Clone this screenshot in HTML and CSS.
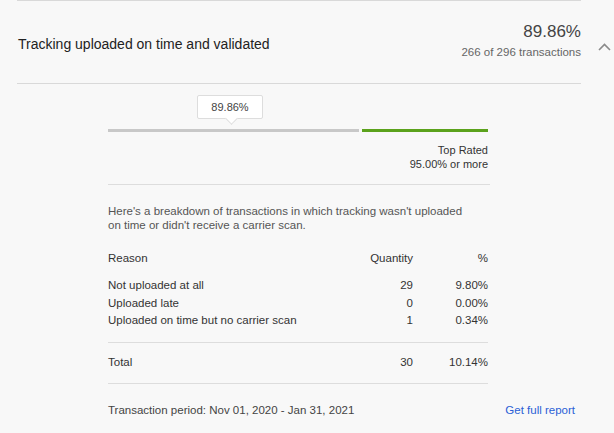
FILE: index.html
```html
<!doctype html>
<html>
<head>
<title>Tracking uploaded on time and validated</title>
<link rel="stylesheet" href="styles.css">
</head>
<body>
<main>
	<div class="summary">
		<div class="summary-head">
			<h2 class="metric-title">Tracking uploaded on time and validated</h2>
			<div class="metric-score">
				<div class="score">89.86%</div>
				<div class="count">266 of 296 transactions</div>
			</div>
		</div>
		<div class="toggle">
			<svg width="13" height="8" viewBox="0 0 13 8"><path d="M1 7 L6.5 1.5 L12 7" fill="none" stroke="#8a8a8a" stroke-width="1.6"/></svg>
		</div>
	</div>

	<div class="detail">
		<div class="meter">
			<div class="marker-row">
				<div class="marker">89.86%</div>
			</div>
			<div class="bar">
				<div class="bar-low"></div>
				<div class="bar-top"></div>
			</div>
			<div class="threshold">
				<div>Top Rated</div>
				<div>95.00% or more</div>
			</div>
		</div>

		<p class="intro">Here's a breakdown of transactions in which tracking wasn't uploaded on time or didn't receive a carrier scan.</p>

		<table class="breakdown">
			<thead>
				<tr><th>Reason</th><th class="num">Quantity</th><th class="num pct">%</th></tr>
			</thead>
			<tbody>
				<tr><td>Not uploaded at all</td><td class="num">29</td><td class="num">9.80%</td></tr>
				<tr><td>Uploaded late</td><td class="num">0</td><td class="num">0.00%</td></tr>
				<tr class="last"><td>Uploaded on time but no carrier scan</td><td class="num">1</td><td class="num">0.34%</td></tr>
			</tbody>
			<tfoot>
				<tr><td>Total</td><td class="num">30</td><td class="num">10.14%</td></tr>
			</tfoot>
		</table>
	</div>

	<div class="footer">
		<span class="period">Transaction period: Nov 01, 2020 - Jan 31, 2021</span>
		<a class="report" href="#">Get full report</a>
	</div>
</main>
</body>
</html>
```

FILE: styles.css
```css
* {
	box-sizing: border-box;
	margin: 0;
	padding: 0;
}

body {
	background: #f8f8f8;
	color: #333;
	font-family: "Liberation Sans", Arial, sans-serif;
	font-size: 11.5px;
}

main {
	padding-left: 17px;
}

.summary {
	display: flex;
}

.summary-head {
	align-items: flex-start;
	border-bottom: 1px solid #d9d9d9;
	border-top: 1px solid #d9d9d9;
	display: flex;
	height: 84px;
	justify-content: space-between;
	width: 564px;
}

.metric-title {
	color: #222;
	font-size: 14px;
	font-weight: normal;
	line-height: 16px;
	padding-left: 1px;
	padding-top: 35px;
}

.metric-score {
	padding-top: 21px;
	text-align: right;
}

.score {
	color: #444;
	font-size: 17px;
	line-height: 20px;
}

.count {
	color: #666;
	font-size: 11.5px;
	line-height: 14px;
	margin-top: 3px;
}

.toggle {
	padding-left: 17px;
	padding-top: 41px;
}

.detail {
	margin-left: 91px;
	width: 382px;
}

.meter {
	border-bottom: 1px solid #ddd;
	padding-bottom: 13px;
	width: 382px;
}

.marker-row {
	padding-left: 89px;
	padding-top: 11px;
}

.marker {
	background: #fff;
	border: 1px solid #ddd;
	border-radius: 2px;
	color: #444;
	font-size: 11px;
	height: 24px;
	line-height: 22px;
	position: relative;
	text-align: center;
	width: 66px;
}

.marker::after {
	background: #fff;
	border-bottom: 1px solid #ddd;
	border-right: 1px solid #ddd;
	bottom: -5px;
	content: "";
	height: 8px;
	left: 29px;
	position: absolute;
	transform: rotate(45deg);
	width: 8px;
}

.bar {
	display: flex;
	gap: 3px;
	margin-top: 10px;
	width: 380px;
}

.bar-low {
	background: #c8c8c8;
	height: 3px;
	width: 251px;
}

.bar-top {
	background: #5ba21c;
	height: 3px;
	width: 126px;
}

.threshold {
	color: #333;
	font-size: 11px;
	line-height: 14px;
	padding-right: 2px;
	padding-top: 11px;
	text-align: right;
}

.intro {
	color: #555;
	line-height: 14px;
	padding-top: 19px;
	width: 366px;
}

.breakdown {
	border-collapse: collapse;
	margin-top: 19px;
	width: 380px;
}

.breakdown th {
	font-weight: normal;
	line-height: 14px;
	padding: 0 0 12px;
	text-align: left;
}

.breakdown th.num, .breakdown td.num {
	text-align: right;
}

.breakdown th.pct {
	width: 75px;
}

.breakdown td {
	line-height: 17.5px;
	padding: 0;
}

.breakdown tr.last td {
	padding-bottom: 12px;
}

.breakdown tfoot td {
	border-bottom: 1px solid #ddd;
	border-top: 1px solid #ddd;
	height: 41px;
}

.footer {
	align-items: center;
	display: flex;
	height: 52px;
	justify-content: space-between;
	padding-left: 91px;
	width: 558px;
}

.period {
	color: #444;
}

.report {
	color: #2a5fd6;
	text-decoration: none;
}
```
